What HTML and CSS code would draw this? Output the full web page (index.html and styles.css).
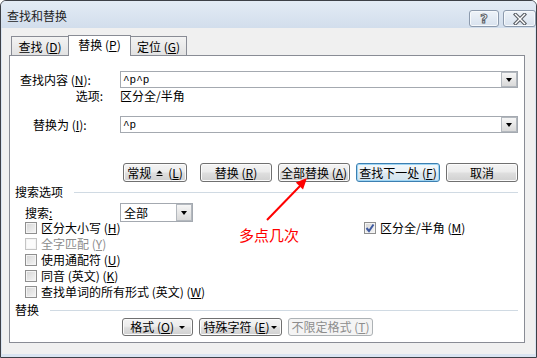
FILE: index.html
```html
<!DOCTYPE html>
<html lang="zh-CN">
<head>
<meta charset="utf-8">
<title>查找和替换</title>
<link rel="stylesheet" href="styles.css">
</head>
<body>
<div class="window">
  <div class="titlebar">
    <span class="title">查找和替换</span>
    <div class="caption">
      <span class="cap-btn help">?</span>
      <span class="cap-btn close">
        <svg width="14" height="12" viewBox="0 0 14 12"><path d="M2.5 1.5 L11.5 10.5 M11.5 1.5 L2.5 10.5" stroke="#5a5f66" stroke-width="3.6" stroke-linecap="square"/><path d="M2.5 1.5 L11.5 10.5 M11.5 1.5 L2.5 10.5" stroke="#fff" stroke-width="1.4" stroke-linecap="square"/></svg>
      </span>
    </div>
  </div>

  <div class="client">
    <div class="tabs">
      <span class="tab t1">查找 (<u>D</u>)</span>
      <span class="tab t2 active">替换 (<u>P</u>)</span>
      <span class="tab t3">定位 (<u>G</u>)</span>
    </div>

    <div class="panel">
      <div class="field">
        <span class="lbl">查找内容 (<u>N</u>):</span>
        <div class="combo wide"><span class="val">^p^p</span><span class="drop"></span></div>
      </div>
      <div class="opts">
        <span class="opt-lbl">选项:</span>
        <span>区分全/半角</span>
      </div>
      <div class="field replace">
        <span class="lbl">替换为 (<u>I</u>):</span>
        <div class="combo wide"><span class="val">^p</span><span class="drop"></span></div>
      </div>

      <div class="actions">
        <span class="btn w64 less"><span>常规</span><svg width="7" height="7" viewBox="0 0 7 7"><path d="M3.5 0.5 L6.5 3.5 L0.5 3.5 Z" fill="#000"/><rect x="0.5" y="5" width="6" height="1" fill="#000"/></svg><span>(<u>L</u>)</span></span>
        <span class="btn w72">替换 (<u>R</u>)</span>
        <span class="btn w72">全部替换 (<u>A</u>)</span>
        <span class="btn w84 focus">查找下一处 (<u>F</u>)</span>
        <span class="btn w72">取消</span>
      </div>

      <div class="group">
        <span>搜索选项</span><span class="rule"></span>
      </div>
      <div class="search">
        <span class="search-lbl">搜索<u>:</u></span>
        <div class="combo small"><span class="val cn">全部</span><span class="drop tall"></span></div>
      </div>

      <div class="checks">
        <div class="col">
          <div class="check"><span class="box"></span>区分大小写 (<u>H</u>)</div>
          <div class="check off"><span class="box"></span>全字匹配 (<u>Y</u>)</div>
          <div class="check"><span class="box"></span>使用通配符 (<u>U</u>)</div>
          <div class="check"><span class="box"></span>同音 (英文) (<u>K</u>)</div>
          <div class="check"><span class="box"></span>查找单词的所有形式 (英文) (<u>W</u>)</div>
        </div>
        <div class="col">
          <div class="check"><span class="box on"><svg width="10" height="10" viewBox="0 0 10 10"><path d="M1.5 5 L4 8 L8.5 1.5" fill="none" stroke="#3f5aa0" stroke-width="2"/></svg></span>区分全/半角 (<u>M</u>)</div>
        </div>
      </div>

      <div class="group second">
        <span>替换</span><span class="rule"></span>
      </div>
      <div class="actions bottom">
        <span class="btn w71">格式 (<u>O</u>) <span class="tri"></span></span>
        <span class="btn w83">特殊字符 (<u>E</u>)<span class="tri"></span></span>
        <span class="btn w85 disabled">不限定格式 (<u>T</u>)</span>
      </div>
    </div>
  </div>

  <div class="note">多点几次</div>
  <svg class="arrow" width="54" height="54" viewBox="0 0 54 54">
    <line x1="7" y1="48" x2="40" y2="14" stroke="#f00" stroke-width="2"/>
    <polygon points="47,6 43,17.4 35.8,10.4" fill="#f00"/>
  </svg>
</div>
</body>
</html>
```

FILE: styles.css
```css
html, body {
   margin: 0;
}
body {
   width: 537px;
   height: 358px;
   overflow: hidden;
   background: #fff;
   font-family: "Noto Sans CJK SC", "Liberation Sans", sans-serif;
   font-size: 12px;
   line-height: 14px;
   color: #000;
}
u {
   text-decoration: underline;
   text-underline-offset: 1px;
}

/* window frame */
.window {
   position: relative;
   box-sizing: border-box;
   width: 537px;
   height: 358px;
   border: 1px solid #3d4047;
   border-radius: 6px 6px 0 0;
   background: #d9e4f1;
   display: flex;
   flex-direction: column;
}
.titlebar {
   height: 27px;
   display: flex;
   justify-content: space-between;
   padding-left: 6px;
   background: linear-gradient(#e3ebf5, #d2deec);
   border-radius: 5px 5px 0 0;
}
.title {
   align-self: center;
   font-size: 12px;
   color: #1e1e1e;
   margin-top: 2px;
}
.caption {
   display: flex;
   gap: 4px;
   margin-top: 9px;
   height: 17px;
}
.cap-btn {
   box-sizing: border-box;
   height: 17px;
   border: 1px solid #8c9aad;
   border-radius: 3px;
   background: linear-gradient(#eef3f9, #d8e2ee);
   box-shadow: inset 0 0 0 1px #f6f9fc;
   display: flex;
   align-items: center;
   justify-content: center;
}
.cap-btn.help {
   width: 30px;
   font-family: "DejaVu Sans", sans-serif;
   font-weight: bold;
   font-size: 13px;
   color: #fff;
   -webkit-text-stroke: 1px #5a5f66;
}
.cap-btn.close {
   width: 33px;
}

.client {
   flex: 1;
   margin: 0 1px 3px 1px;
   background: #f0f0f0;
}

/* tabs */
.tabs {
   position: relative;
   z-index: 1;
   display: flex;
   align-items: flex-end;
   height: 20px;
   margin: 7px 0 0 9px;
}
.tab {
   box-sizing: border-box;
   height: 19px;
   border: 1px solid #898c95;
   border-bottom: none;
   background: linear-gradient(#f3f3f3, #e2e2e2);
   display: flex;
   align-items: center;
   justify-content: center;
   padding-top: 1px;
   white-space: pre;
}
.tab + .tab {
   margin-left: -1px;
}
.t1 { width: 58px; }
.t2 { width: 63px; }
.t3 { width: 57px; }
.tab.active {
   height: 21px;
   margin-bottom: -1px;
   background: #fff;
   padding-top: 0;
   padding-bottom: 2px;
}

.panel {
   box-sizing: border-box;
   width: 516px;
   margin-left: 7px;
   background: #fff;
   border: 1px solid #898c95;
   padding: 15px 0 6px;
}

/* text fields */
.field {
   display: flex;
   align-items: center;
   height: 17px;
}
.field .lbl {
   width: 100px;
   padding-left: 10px;
}
.field.replace {
   margin-top: 13px;
}
.field.replace .lbl {
   width: 87px;
   padding-left: 23px;
}
.combo {
   box-sizing: border-box;
   height: 17px;
   border: 1px solid #a4a9b0;
   background: #fff;
   display: flex;
   align-items: center;
   justify-content: space-between;
}
.combo.wide {
   width: 398px;
}
.combo .val {
   padding-left: 2px;
   font-family: "Liberation Mono", monospace;
   font-size: 11px;
}
.combo .val.cn {
   font-family: "Noto Sans CJK SC", sans-serif;
   font-size: 12px;
   padding-left: 3px;
}
.drop {
   box-sizing: border-box;
   width: 16px;
   height: 15px;
   border: 1px solid #b3b8be;
   background: linear-gradient(#f6f6f6, #d9d9d9);
   display: flex;
   align-items: center;
   justify-content: center;
}
.drop:after {
   content: "";
   border-left: 3.5px solid transparent;
   border-right: 3.5px solid transparent;
   border-top: 4px solid #000;
   margin-top: 1px;
}
.drop.tall {
   height: 17px;
}
.opts {
   display: flex;
   height: 14px;
   margin-top: 1px;
}
.opt-lbl {
   width: 93px;
   text-align: right;
   margin-right: 17px;
}

/* buttons */
.actions {
   display: flex;
   gap: 6px;
   height: 19px;
   margin-top: 30px;
   padding-left: 113px;
}
.actions.bottom {
   height: 18px;
   margin-top: 1px;
   padding-left: 112px;
}
.btn {
   box-sizing: border-box;
   border: 1px solid #707070;
   border-radius: 3px;
   background: linear-gradient(#f4f4f4 0%, #ececec 45%, #dedede 55%, #d0d0d0 100%);
   box-shadow: inset 0 0 0 1px #fbfbfb;
   display: flex;
   align-items: center;
   justify-content: center;
   white-space: pre;
}
.btn.less {
   margin-right: 7px;
   gap: 5px;
}
.btn.less svg {
   margin-top: 1px;
}
.btn.focus {
   border-color: #3c7fb1;
   box-shadow: inset 0 0 0 1px #9fd5f3;
   background: linear-gradient(#f3f8fb 0%, #eaf2f7 45%, #dde9f1 55%, #d2e3ee 100%);
}
.btn.disabled {
   border-color: #adb2b5;
   background: #f4f4f4;
   box-shadow: none;
   color: #8d8d8d;
}
.w64 { width: 64px; }
.w71 { width: 71px; }
.w72 { width: 72px; }
.w83 { width: 83px; }
.w84 { width: 84px; }
.w85 { width: 85px; }
.tri {
   border-left: 3px solid transparent;
   border-right: 3px solid transparent;
   border-top: 3px solid #000;
   margin-left: 2px;
   margin-top: 1px;
}

/* group headers */
.group {
   display: flex;
   align-items: center;
   height: 14px;
   margin-top: 3px;
   padding: 0 6px 0 5px;
}
.rule {
   flex: 1;
   height: 1px;
   margin-left: 11px;
   background: #d0dae3;
}

.search {
   display: flex;
   align-items: center;
   height: 19px;
   margin-top: 4px;
   padding-left: 15px;
}
.search-lbl {
   width: 95px;
}
.combo.small {
   width: 73px;
   height: 19px;
}

/* checkboxes */
.checks {
   display: grid;
   grid-template-columns: 339px auto;
   margin-top: -2px;
   padding-left: 15px;
}
.check {
   display: flex;
   align-items: center;
   height: 16px;
   white-space: pre;
}
.box {
   box-sizing: border-box;
   width: 12px;
   height: 12px;
   margin-right: 4px;
   border: 1px solid #8f8f8f;
   background: linear-gradient(135deg, #d4d4d4, #f6f6f6);
   box-shadow: inset 0 0 0 1px #f4f4f4;
   display: flex;
   align-items: center;
   justify-content: center;
}
.check.off {
   color: #8d8d8d;
}
.check.off .box {
   border-color: #c4c4c4;
   background: #fbfbfb;
}

/* annotation over the dialog */
.note {
   position: absolute;
   left: 238px;
   top: 226px;
   font-size: 15px;
   line-height: 15px;
   color: #f00;
}
.arrow {
   position: absolute;
   left: 259px;
   top: 171px;
}
```
